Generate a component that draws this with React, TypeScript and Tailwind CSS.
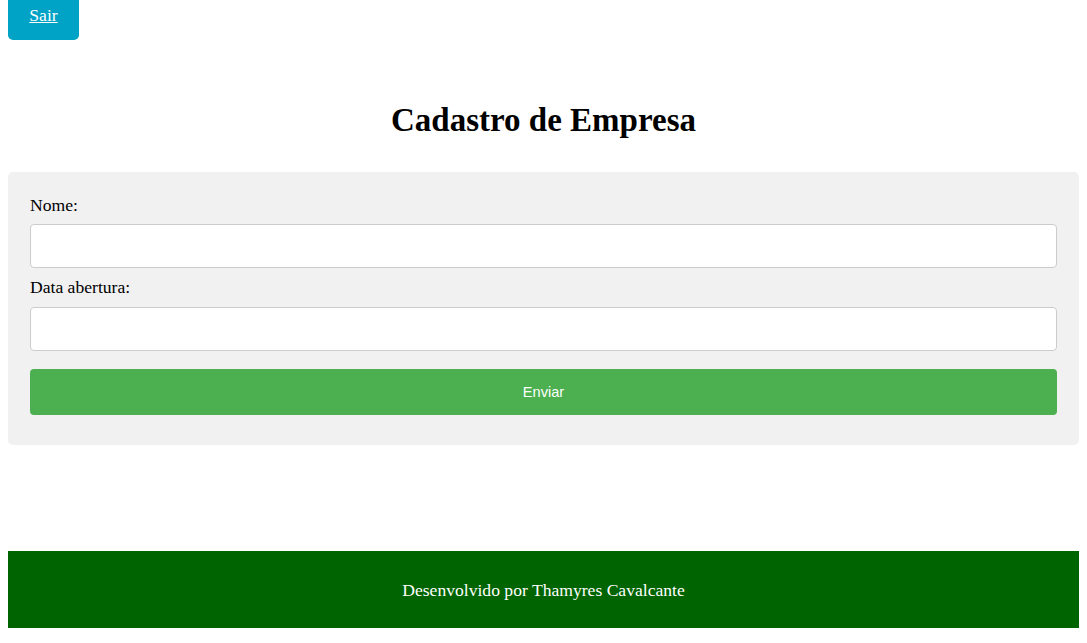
export default function App() {
  return (
    <div className="min-h-[643px] bg-white px-2 pb-[15px] font-['Liberation_Serif',serif] text-[17.6px] text-black">
      <a
        href="#"
        className="flex h-[40px] w-[71px] justify-center rounded-b-[5px] bg-[#00a3c5] pt-[5px] leading-[20px] text-white underline"
      >
        Sair
      </a>

      <h1 className="mt-[61px] mb-[33px] text-center text-[33px] font-bold leading-[38px]">
        Cadastro de Empresa
      </h1>

      <form
        className="rounded-[5px] bg-[#f1f1f1] px-[22px] pt-[23px] pb-[30px]"
        onSubmit={(e) => e.preventDefault()}
      >
        <label htmlFor="nome" className="block leading-[20px]">
          Nome:
        </label>
        <input
          id="nome"
          type="text"
          className="mt-[9px] block h-[44px] w-full rounded-[4px] border border-[#cccccc] bg-white px-2"
        />

        <label htmlFor="data" className="mt-[9px] block leading-[20px]">
          Data abertura:
        </label>
        <input
          id="data"
          type="text"
          className="mt-[10px] block h-[44px] w-full rounded-[4px] border border-[#cccccc] bg-white px-2"
        />

        <button
          type="submit"
          className="mt-[18px] block h-[46px] w-full rounded-[4px] bg-[#4caf50] pt-[2px] font-['Liberation_Sans',Arial,sans-serif] text-[14.6px] text-white"
        >
          Enviar
        </button>
      </form>

      <footer className="mt-[106px] flex h-[77px] items-center justify-center bg-[#006400] leading-[20px] text-white">
        Desenvolvido por Thamyres Cavalcante
      </footer>
    </div>
  );
}
